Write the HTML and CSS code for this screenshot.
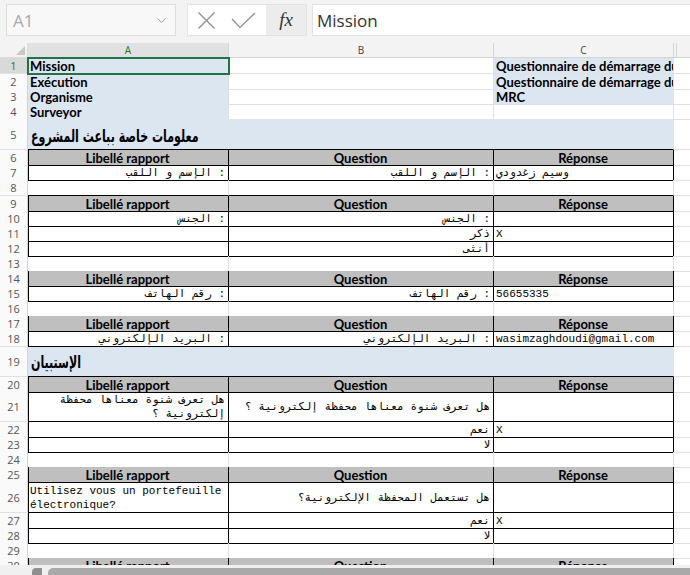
FILE: index.html
```html
<!DOCTYPE html>
<html>
<head>
<meta charset="utf-8">
<link rel="stylesheet" href="styles.css">
</head>
<body>
<div class="fbar">
  <div class="namebox"><span>A1</span><svg width="9" height="5" viewBox="0 0 9 5"><polyline points="0.5,0.5 4.5,4.5 8.5,0.5" fill="none" stroke="#a0a0a0" stroke-width="1"/></svg></div>
  <div class="btns">
    <div class="btn"><svg width="17" height="17" viewBox="0 0 17 17"><path d="M0.5 0.5 L16.5 16.5 M16.5 0.5 L0.5 16.5" stroke="#8c8c8c" stroke-width="1.2" fill="none"/></svg></div>
    <div class="btn"><svg width="25" height="17" viewBox="0 0 25 17"><polyline points="1,7 9,15.5 24,1" stroke="#8c8c8c" stroke-width="1.2" fill="none"/></svg></div>
    <div class="fx">fx</div>
  </div>
  <div class="input">Mission</div>
</div>
<div class="sheet">
  <div class="row colhdr">
    <div class="corner"></div><div class="ch sel">A</div><div class="ch">B</div><div class="ch">C</div><div class="ch"></div><div class="ch last"></div>
  </div>
  <div class="row h16">
    <div class="rh sel">1</div><div class="c blue b a1">Mission</div><div class="c"></div><div class="c blue b">Questionnaire de démarrage du</div><div class="c d"></div><div class="c e"></div>
  </div>
  <div class="row">
    <div class="rh">2</div><div class="c blue b">Exécution</div><div class="c"></div><div class="c blue b">Questionnaire de démarrage du</div><div class="c d"></div><div class="c e"></div>
  </div>
  <div class="row">
    <div class="rh">3</div><div class="c blue b">Organisme</div><div class="c"></div><div class="c blue b">MRC</div><div class="c d"></div><div class="c e"></div>
  </div>
  <div class="row">
    <div class="rh">4</div><div class="c blue b">Surveyor</div><div class="c"></div><div class="c"></div><div class="c d"></div><div class="c e"></div>
  </div>
  <div class="row h31">
    <div class="rh">5</div><div class="c blue merge bb title t1"><span dir="rtl">معلومات خاصة بباعث المشروع</span></div><div class="c d"></div><div class="c e"></div>
  </div>
  <div class="row">
    <div class="rh">6</div><div class="c th fa">Libellé rapport</div><div class="c th">Question</div><div class="c th">Réponse</div><div class="c d"></div><div class="c e"></div>
  </div>
  <div class="row">
    <div class="rh">7</div><div class="c td fa m r"><span dir="rtl" class="ls1">: الإسم و اللقب</span></div><div class="c td m r"><span dir="rtl" class="ls1">: الإسم و اللقب</span></div><div class="c td m"><span dir="rtl" class="ls4">وسيم زغدودي</span></div><div class="c d"></div><div class="c e"></div>
  </div>
  <div class="row h16">
    <div class="rh">8</div><div class="c bb"></div><div class="c bb"></div><div class="c bb"></div><div class="c d"></div><div class="c e"></div>
  </div>
  <div class="row">
    <div class="rh">9</div><div class="c th fa">Libellé rapport</div><div class="c th">Question</div><div class="c th">Réponse</div><div class="c d"></div><div class="c e"></div>
  </div>
  <div class="row">
    <div class="rh">10</div><div class="c td fa m r"><span dir="rtl" class="ls07">: الجنس</span></div><div class="c td m r"><span dir="rtl" class="ls07">: الجنس</span></div><div class="c td m"></div><div class="c d"></div><div class="c e"></div>
  </div>
  <div class="row">
    <div class="rh">11</div><div class="c td fa m"></div><div class="c td m r"><span dir="rtl" class="ls2">ذكر</span></div><div class="c td m">X</div><div class="c d"></div><div class="c e"></div>
  </div>
  <div class="row">
    <div class="rh">12</div><div class="c td fa m"></div><div class="c td m r"><span dir="rtl">أنثى</span></div><div class="c td m"></div><div class="c d"></div><div class="c e"></div>
  </div>
  <div class="row">
    <div class="rh">13</div><div class="c bb"></div><div class="c bb"></div><div class="c bb"></div><div class="c d"></div><div class="c e"></div>
  </div>
  <div class="row">
    <div class="rh">14</div><div class="c th fa">Libellé rapport</div><div class="c th">Question</div><div class="c th">Réponse</div><div class="c d"></div><div class="c e"></div>
  </div>
  <div class="row">
    <div class="rh">15</div><div class="c td fa m r"><span dir="rtl" class="ls03">: رقم الهاتف</span></div><div class="c td m r"><span dir="rtl" class="ls03">: رقم الهاتف</span></div><div class="c td m">56655335</div><div class="c d"></div><div class="c e"></div>
  </div>
  <div class="row">
    <div class="rh">16</div><div class="c bb"></div><div class="c bb"></div><div class="c bb"></div><div class="c d"></div><div class="c e"></div>
  </div>
  <div class="row">
    <div class="rh">17</div><div class="c th fa">Libellé rapport</div><div class="c th">Question</div><div class="c th">Réponse</div><div class="c d"></div><div class="c e"></div>
  </div>
  <div class="row h16">
    <div class="rh">18</div><div class="c td fa m r"><span dir="rtl" class="ls2">: البريد الإلكتروني</span></div><div class="c td m r"><span dir="rtl" class="ls2">: البريد الإلكتروني</span></div><div class="c td m">wasimzaghdoudi@gmail.com</div><div class="c d"></div><div class="c e"></div>
  </div>
  <div class="row h30">
    <div class="rh">19</div><div class="c blue merge bb title"><span dir="rtl">الإستبيان</span></div><div class="c d"></div><div class="c e"></div>
  </div>
  <div class="row">
    <div class="rh">20</div><div class="c th fa">Libellé rapport</div><div class="c th">Question</div><div class="c th">Réponse</div><div class="c d"></div><div class="c e"></div>
  </div>
  <div class="row h30">
    <div class="rh">21</div><div class="c td fa m r wrap"><span dir="rtl">هل تعرف شنوة معناها محفظة إلكترونية ؟</span></div><div class="c td m r"><span dir="rtl">هل تعرف شنوة معناها محفظة إلكترونية ؟</span></div><div class="c td m"></div><div class="c d"></div><div class="c e"></div>
  </div>
  <div class="row">
    <div class="rh">22</div><div class="c td fa m"></div><div class="c td m r"><span dir="rtl" class="ls07">نعم</span></div><div class="c td m">X</div><div class="c d"></div><div class="c e"></div>
  </div>
  <div class="row">
    <div class="rh">23</div><div class="c td fa m"></div><div class="c td m r"><span dir="rtl">لا</span></div><div class="c td m"></div><div class="c d"></div><div class="c e"></div>
  </div>
  <div class="row">
    <div class="rh">24</div><div class="c bb"></div><div class="c bb"></div><div class="c bb"></div><div class="c d"></div><div class="c e"></div>
  </div>
  <div class="row">
    <div class="rh">25</div><div class="c th fa">Libellé rapport</div><div class="c th">Question</div><div class="c th">Réponse</div><div class="c d"></div><div class="c e"></div>
  </div>
  <div class="row h31">
    <div class="rh">26</div><div class="c td fa m wrap"><span>Utilisez vous un portefeuille électronique?</span></div><div class="c td m r"><span dir="rtl">هل تستعمل المحفظة الإلكترونية؟</span></div><div class="c td m"></div><div class="c d"></div><div class="c e"></div>
  </div>
  <div class="row">
    <div class="rh">27</div><div class="c td fa m"></div><div class="c td m r"><span dir="rtl" class="ls07">نعم</span></div><div class="c td m">X</div><div class="c d"></div><div class="c e"></div>
  </div>
  <div class="row">
    <div class="rh">28</div><div class="c td fa m"></div><div class="c td m r"><span dir="rtl">لا</span></div><div class="c td m"></div><div class="c d"></div><div class="c e"></div>
  </div>
  <div class="row">
    <div class="rh">29</div><div class="c bb"></div><div class="c bb"></div><div class="c bb"></div><div class="c d"></div><div class="c e"></div>
  </div>
  <div class="row">
    <div class="rh">30</div><div class="c th fa">Libellé rapport</div><div class="c th">Question</div><div class="c th">Réponse</div><div class="c d"></div><div class="c e"></div>
  </div>
</div>
<div class="hscroll">
  <div class="hs-btn"></div>
  <div class="hs-thumb"></div>
</div>
</body>
</html>
```
FILE: styles.css
```css
* { box-sizing: border-box; margin: 0; padding: 0; }
html, body { width: 690px; height: 575px; overflow: hidden; }
body { background: #f3f3f3; font-family: "Lato", "DejaVu Sans", sans-serif; position: relative; }

.fbar { display: flex; height: 43px; padding: 4px 0 0 6px; }
.namebox { width: 170px; height: 32px; border: 1px solid #dddddd; background: #f8f8f8; display: flex; align-items: center; justify-content: space-between; padding: 0 9px 0 6px; font-family: "Open Sans", sans-serif; font-size: 17px; color: #a8a8a8; }
.btns { display: flex; margin-left: 11px; width: 120px; height: 32px; border: 1px solid #e3e3e3; background: #fff; }
.btn { width: 38px; display: flex; align-items: center; justify-content: center; }
.btn:first-child { width: 36px; }
.fx { margin-left: auto; width: 40px; background: #ececec; display: flex; align-items: center; justify-content: center; font-family: "Liberation Serif", serif; font-style: italic; font-size: 19px; color: #333; }
.input { flex: 1; margin-left: 5px; height: 32px; border: 1px solid #e3e3e3; border-right: none; background: #fff; font-family: "Open Sans", sans-serif; font-size: 17px; color: #333; padding-left: 4px; display: flex; align-items: center; }

.sheet { background: #fff; }
.row { display: grid; grid-template-columns: 28px 201px 265px 180px 3px 1fr; height: 15px; }
.h16 { height: 16px; }
.h30 { height: 30px; }
.h31 { height: 31px; }

.colhdr { background: #f3f3f3; }
.corner { display: flex; justify-content: flex-end; align-items: flex-end; padding: 0 2px 2px 0; border-right: 1px solid #dcdcdc; border-bottom: 1px solid #dcdcdc; }
.corner::after { content: ""; width: 0; height: 0; border-left: 9px solid transparent; border-bottom: 9px solid #c8c8c8; }
.ch { border-right: 1px solid #d4d4d4; border-bottom: 1px solid #d4d4d4; display: flex; align-items: center; justify-content: center; font-family: "Open Sans", sans-serif; font-size: 10px; color: #444; }
.ch.sel { background: #e1e1e1; color: #217346; }
.ch.last { border-right: none; }

.rh { background: #fafafa; border-right: 1px solid #d4d4d4; border-bottom: 1px solid #e1e1e1; display: flex; align-items: center; justify-content: center; font-family: "Open Sans", sans-serif; font-size: 11px; color: #555; }
.rh.sel { background: #d9d9d9; color: #217346; }

.c { border-right: 1px solid #e1e1e1; border-bottom: 1px solid #e1e1e1; display: flex; align-items: center; padding: 0 3px 0 2px; overflow: hidden; white-space: nowrap; font-size: 13px; color: #000; }
.c.d { border-right: none; }
.c.e { border-right: none; }
.blue { background: #dce6f1; }
.b { font-weight: bold; }
.merge { grid-column: span 3; }
.title { font-family: "DejaVu Sans", sans-serif; font-weight: bold; font-size: 17px; padding-left: 3px; }
.title span { display: inline-block; transform: scaleX(0.65); transform-origin: left center; }
.t1 { padding-top: 3px; }
.a1 { outline: 2px solid #217346; outline-offset: -1px; position: relative; z-index: 2; }

.bb { border-bottom-color: #000; }
.th { background: #bfbfbf; font-weight: bold; justify-content: center; border-right-color: #000; border-bottom-color: #000; }
.td { border-right-color: #000; border-bottom-color: #000; }
.fa { box-shadow: inset 1px 0 0 #000; }
.m { font-family: "Liberation Mono", "DejaVu Sans Mono", monospace; font-size: 11px; }
.r { justify-content: flex-end; }
.wrap { white-space: normal; line-height: 14px; padding-top: 1px; }
.wrap span { display: block; width: 100%; }
.r.wrap span { text-align: right; }
.ls03 { letter-spacing: 0.3px; }
.ls07 { letter-spacing: 0.7px; }
.ls1 { letter-spacing: 1.2px; }
.ls2 { letter-spacing: 2px; }
.ls4 { letter-spacing: 4px; }

.hscroll { position: absolute; left: 0; right: 0; bottom: 0; height: 10px; background: #f0f0f0; display: flex; align-items: flex-end; padding-left: 32px; gap: 6px; }
.hs-btn { width: 10px; height: 7px; background: #8f8f8f; border-radius: 4px 0 0 0; }
.hs-thumb { flex: 1; height: 7px; background: #a9a9a9; border-radius: 5px 0 0 0; }
```
